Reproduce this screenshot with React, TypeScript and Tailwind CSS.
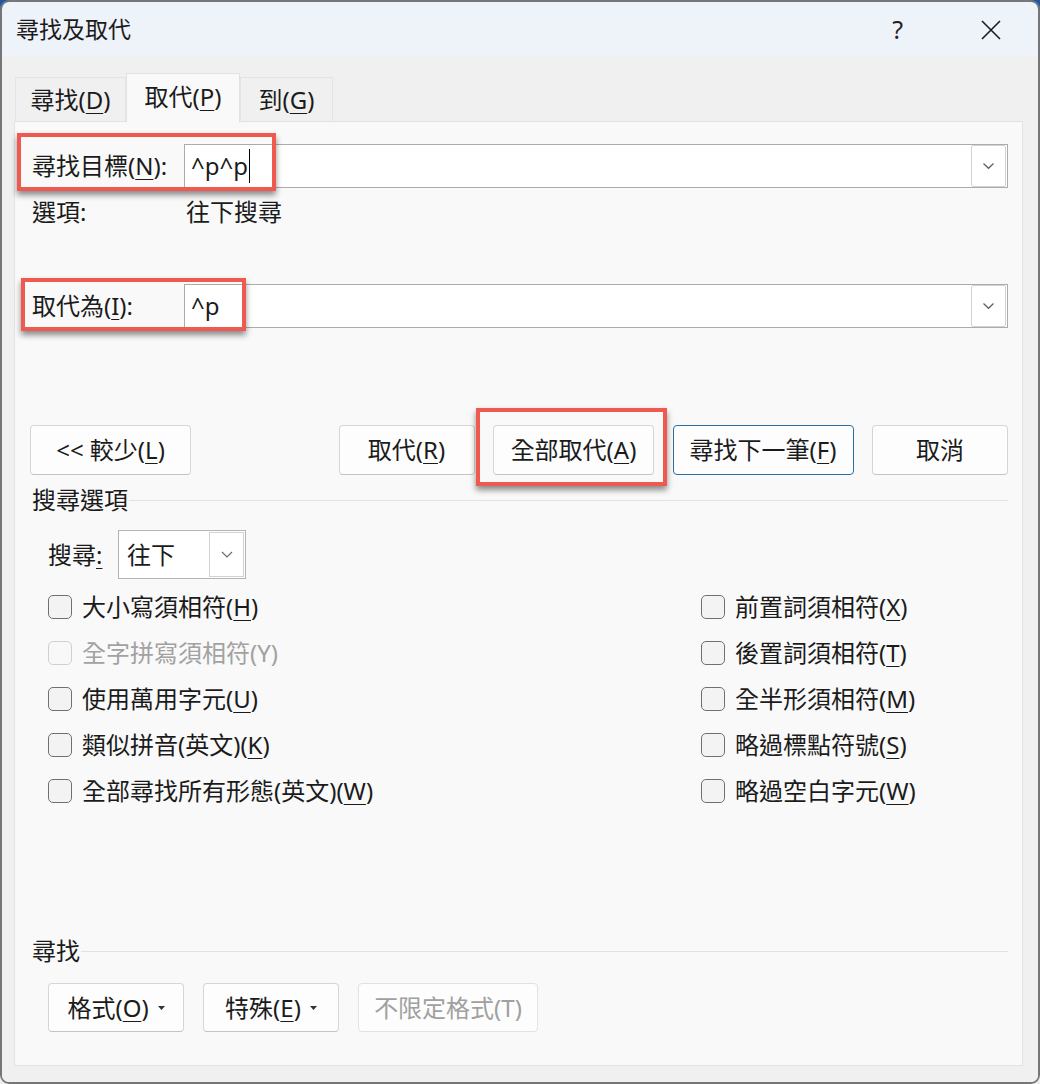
import React from "react";

// Access-key letter, underlined like a Windows mnemonic
function K({ c }: { c: string }) {
  return <span className="underline decoration-1 underline-offset-[4px]">{c}</span>;
}

function Chevron() {
  return (
    <svg width="13" height="8" viewBox="0 0 13 8" fill="none">
      <path d="M1.5 1.5 L6.5 6.3 L11.5 1.5" stroke="#5e5e5e" strokeWidth="1.2" />
    </svg>
  );
}

function Caret() {
  return (
    <svg width="7" height="4" viewBox="0 0 7 4" className="ml-[9px]">
      <path d="M0 0 H7 L3.5 4 Z" fill="#333" />
    </svg>
  );
}

function Combo({ children }: { children: React.ReactNode }) {
  return (
    <div className="flex h-[44px] flex-1 items-center border border-[#ababab] bg-white">
      <div className="flex h-full items-center pl-[6px]">{children}</div>
      <div className="ml-auto mr-px flex h-[42px] w-[35px] items-center justify-center rounded-[2px] border border-[#d2d2d2]">
        <Chevron />
      </div>
    </div>
  );
}

function Check({ label, disabled }: { label: React.ReactNode; disabled?: boolean }) {
  return (
    <div className="flex h-[46px] items-center gap-[10px]">
      <span
        className={
          disabled
            ? "h-[24px] w-[24px] rounded-[5px] border-[1.5px] border-[#d0d0d0] bg-[#f8f8f8]"
            : "h-[24px] w-[24px] rounded-[5px] border-[1.5px] border-[#707070] bg-[#f3f3f3]"
        }
      />
      <span className={disabled ? "text-[#a2a2a2]" : ""}>{label}</span>
    </div>
  );
}

function Btn({
  children,
  w,
  kind,
}: {
  children: React.ReactNode;
  w: string;
  kind?: "default" | "disabled";
}) {
  const base = "flex h-full items-center justify-center rounded-[4px] border bg-[#fdfdfd] ";
  const tone =
    kind === "default"
      ? "border-[#2a6ea6]"
      : kind === "disabled"
      ? "border-[#e2e2e2] text-[#a0a0a0] bg-[#fbfbfb]"
      : "border-[#d6d6d6] border-b-[#c4c4c4]";
  return <div className={base + tone + " " + w}>{children}</div>;
}

function Section({ title }: { title: string }) {
  return (
    <div className="flex h-[30px] items-center">
      <span>{title}</span>
      <div className="ml-[1px] h-px flex-1 bg-[#e2e2e2]" />
    </div>
  );
}

export default function App() {
  return (
    <div className="relative h-[1084px] w-[1040px] overflow-hidden bg-[linear-gradient(to_bottom,#1f56a6_0px,#1f56a6_30px,#eeeeee_30px)] font-['Noto_Sans','Noto_Sans_CJK_TC',sans-serif] text-[24px] leading-none text-[#1b1b1b]">
      <div className="flex h-full w-full flex-col overflow-hidden rounded-[9px] border-2 border-[#767676]">
        {/* title bar */}
        <div className="flex h-[55px] shrink-0 items-center bg-[#eef2f9] pl-[14px]">
          <span className="text-[23px]">尋找及取代</span>
          <span className="ml-auto mr-[78px] text-[25px] text-[#222]">?</span>
          <svg width="20" height="20" viewBox="0 0 20 20" className="mr-[37px]">
            <path d="M1 1 L19 19 M19 1 L1 19" stroke="#1b1b1b" strokeWidth="1.6" />
          </svg>
        </div>

        {/* client area */}
        <div className="flex flex-1 flex-col bg-[#f0f0f0] pb-[16px] pl-[12px] pr-[15px] pt-[16px]">
          {/* tabs */}
          <div className="ml-px flex h-[48px] items-end">
            <div className="flex h-[44px] w-[111px] items-center justify-center border border-b-0 border-[#e4e4e4]">
              尋找(<K c="D" />)
            </div>
            <div className="relative z-10 -mb-px flex h-[49px] w-[114px] items-center justify-center border border-b-0 border-[#e2e2e2] bg-[#f9f9f9] pb-[2px]">
              取代(<K c="P" />)
            </div>
            <div className="flex h-[44px] w-[93px] items-center justify-center border border-b-0 border-[#e4e4e4]">
              到(<K c="G" />)
            </div>
          </div>

          {/* tab page */}
          <div className="flex flex-1 flex-col border border-[#e2e2e2] bg-[#f9f9f9] pl-[17px] pr-[14px]">
            <div className="mt-[22px] flex h-[44px] items-center">
              <span className="w-[152px]">
                尋找目標(<K c="N" />):
              </span>
              <Combo>
                <span>^p^p</span>
                <span className="ml-px h-[34px] w-px bg-black" />
              </Combo>
            </div>

            <div className="mt-[9px] flex h-[30px] items-center">
              <span className="w-[154px]">選項:</span>
              <span>往下搜尋</span>
            </div>

            <div className="mt-[57px] flex h-[44px] items-center">
              <span className="w-[152px]">
                取代為(<K c="I" />):
              </span>
              <Combo>
                <span>^p</span>
              </Combo>
            </div>

            {/* command buttons */}
            <div className="-ml-[2px] mt-[97px] flex h-[50px] items-stretch">
              <Btn w="w-[161px]">
                &lt;&lt; 較少(<K c="L" />)
              </Btn>
              <div className="ml-auto flex gap-[18.5px]">
                <Btn w="w-[136px]">
                  取代(<K c="R" />)
                </Btn>
                <Btn w="w-[161px]">
                  全部取代(<K c="A" />)
                </Btn>
                <Btn w="w-[181px]" kind="default">
                  尋找下一筆(<K c="F" />)
                </Btn>
                <Btn w="w-[136px]">取消</Btn>
              </div>
            </div>

            <div className="mt-[10px]">
              <Section title="搜尋選項" />
            </div>

            <div className="mt-[15px] flex h-[49px] items-center pl-[16px]">
              <span className="w-[70px]">
                搜尋<span className="underline decoration-1 underline-offset-[4px]">:</span>
              </span>
              <div className="flex h-full w-[128px] items-center border border-[#b4b4b4] bg-white">
                <span className="pl-[8px]">往下</span>
                <div className="ml-auto mr-px flex h-[45px] w-[35px] items-center justify-center border border-[#d2d2d2]">
                  <svg width="12" height="7" viewBox="0 0 12 7" fill="none">
                    <path d="M1 1 L6 6 L11 1" stroke="#6a6a6a" strokeWidth="1.1" />
                  </svg>
                </div>
              </div>
            </div>

            {/* option check boxes */}
            <div className="mt-[5px] grid grid-cols-[653px_1fr] pl-[16px]">
              <Check label={<>大小寫須相符(<K c="H" />)</>} />
              <Check label={<>前置詞須相符(<K c="X" />)</>} />
              <Check label="全字拼寫須相符(Y)" disabled />
              <Check label={<>後置詞須相符(<K c="T" />)</>} />
              <Check label={<>使用萬用字元(<K c="U" />)</>} />
              <Check label={<>全半形須相符(<K c="M" />)</>} />
              <Check label={<>類似拼音(英文)(<K c="K" />)</>} />
              <Check label={<>略過標點符號(<K c="S" />)</>} />
              <Check label={<>全部尋找所有形態(英文)(<K c="W" />)</>} />
              <Check label={<>略過空白字元(<K c="W" />)</>} />
            </div>

            <div className="mt-[122px]">
              <Section title="尋找" />
            </div>

            <div className="mt-[17px] flex h-[49px] gap-[19px] pl-[16px]">
              <Btn w="w-[136px]">
                格式(<K c="O" />)
                <Caret />
              </Btn>
              <Btn w="w-[136px]">
                特殊(<K c="E" />)
                <Caret />
              </Btn>
              <Btn w="w-[180px]" kind="disabled">
                不限定格式(T)
              </Btn>
            </div>
          </div>
        </div>
      </div>

      {/* red callout frames drawn over the dialog */}
      <div className="absolute left-[17px] top-[133px] h-[58px] w-[259px] border-[4px] border-[#ee5a4f] shadow-[0_4px_6px_rgba(0,0,0,0.45)]" />
      <div className="absolute left-[21px] top-[278px] h-[53px] w-[225px] border-[4px] border-[#ee5a4f] shadow-[0_4px_6px_rgba(0,0,0,0.45)]" />
      <div className="absolute left-[476px] top-[408px] h-[78px] w-[191px] border-[4px] border-[#ee5a4f] shadow-[0_4px_6px_rgba(0,0,0,0.45)]" />
    </div>
  );
}
